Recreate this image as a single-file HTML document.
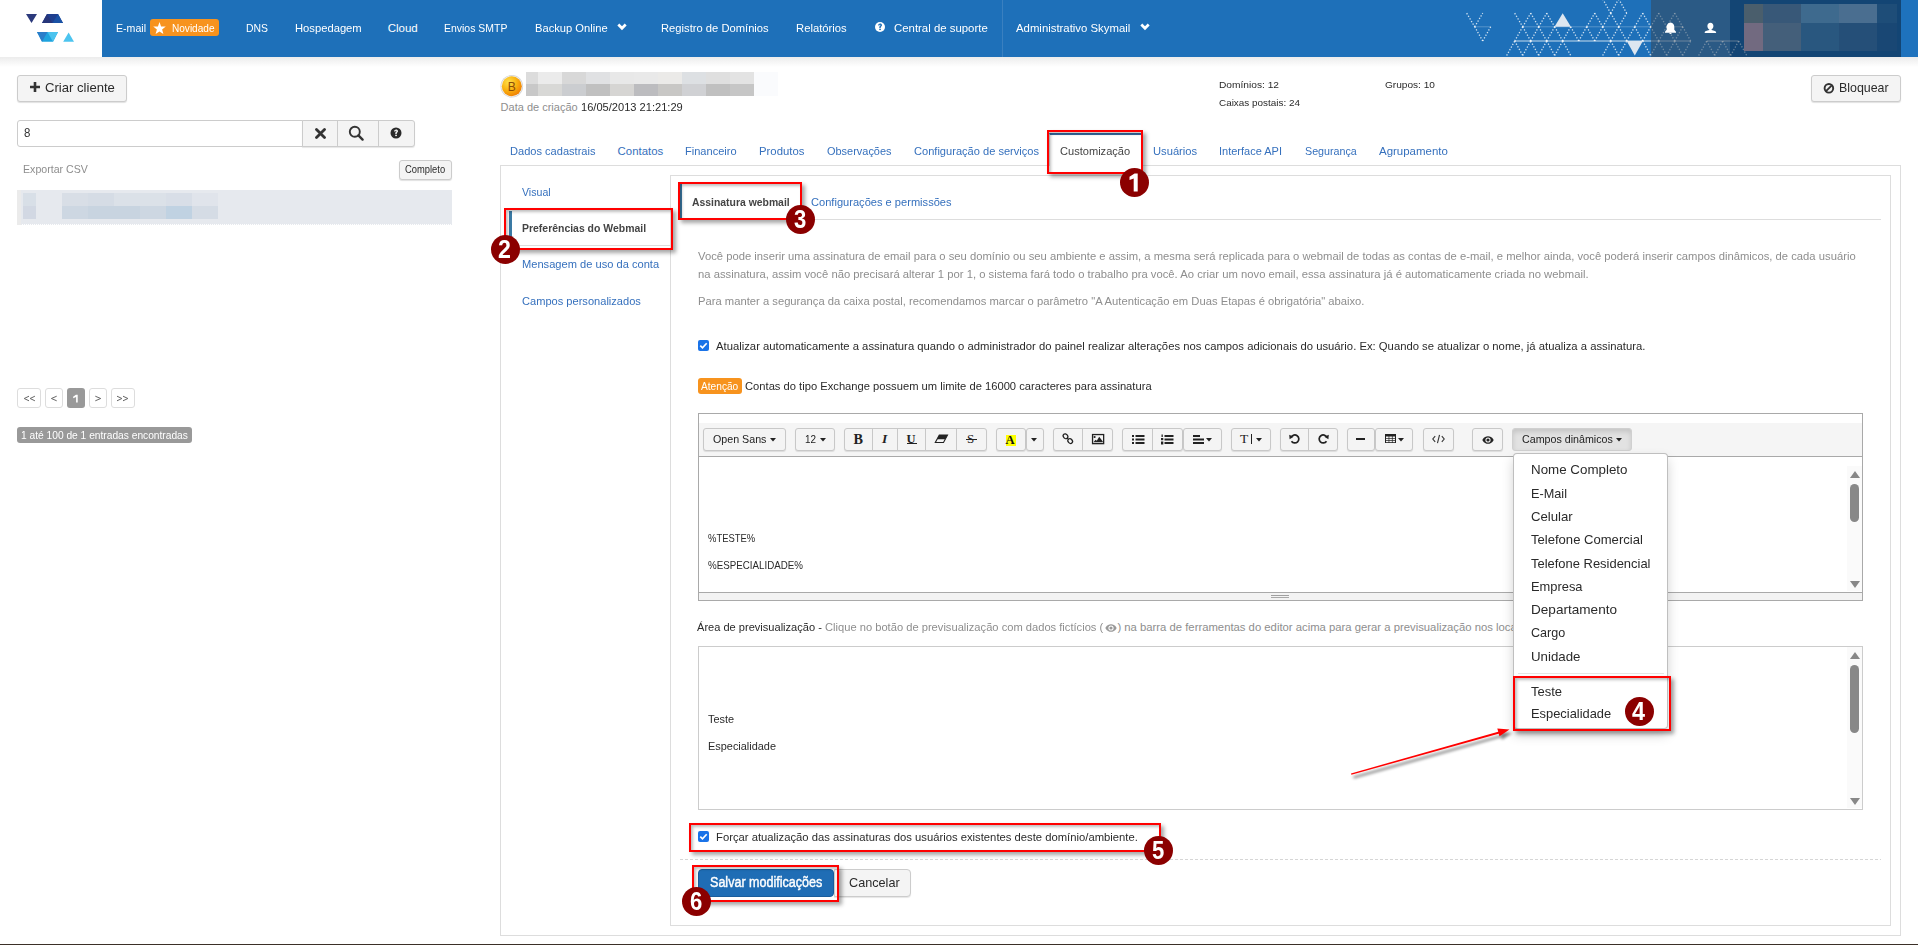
<!DOCTYPE html>
<html><head><meta charset="utf-8"><style>
html,body{margin:0;padding:0;background:#fff;width:1918px;height:945px;overflow:hidden;position:relative}
.a{position:absolute;box-sizing:border-box}
.t{position:absolute;white-space:nowrap;line-height:30px;font-family:"Liberation Sans",sans-serif;transform-origin:0 0}
</style></head><body>
<div class="a" style="left:0px;top:0px;width:102px;height:57px;background:#fff"></div>
<div class="a" style="left:102px;top:0px;width:1816px;height:57px;background:#1e70b9"></div>
<div class="a" style="left:0px;top:57px;width:1918px;height:10px;background:linear-gradient(#ececec,#fff)"></div>
<svg class="a" style="left:0;top:0" width="102" height="57" viewBox="0 0 102 57">
<polygon points="26,14 37,14 31.5,23" fill="#2c3a7c"/>
<polygon points="47,14 58,14 63,23 42,23" fill="#1f3f8f"/>
<polygon points="47,14 52.5,23 42,23" fill="#27367a"/>
<polygon points="58,14 63,23 52.5,23" fill="#1a52a5"/>
<polygon points="37,32 58,32 53,41.7 42,41.7" fill="#1ea3de"/>
<polygon points="37,32 47.5,32 42,41.7" fill="#2a7dc9"/>
<polygon points="47.5,32 58,32 53,41.7" fill="#4cc3ee"/>
<polygon points="68.6,32.5 74,41.7 63.2,41.7" fill="#4cc4ef"/>
</svg>
<span class="t" style="left:116.25px;top:13.00px;font-size:11.5px;color:#fff;transform:scaleX(0.9202);">E-mail</span>
<span class="t" style="left:245.80px;top:13.00px;font-size:11.5px;color:#fff;transform:scaleX(0.9053);">DNS</span>
<span class="t" style="left:294.50px;top:13.00px;font-size:11.5px;color:#fff;transform:scaleX(0.9751);">Hospedagem</span>
<span class="t" style="left:387.70px;top:13.00px;font-size:11.5px;color:#fff;">Cloud</span>
<span class="t" style="left:444.30px;top:13.00px;font-size:11.5px;color:#fff;transform:scaleX(0.9096);">Envios SMTP</span>
<span class="t" style="left:534.70px;top:13.00px;font-size:11.5px;color:#fff;transform:scaleX(0.9706);">Backup Online</span>
<span class="t" style="left:661.30px;top:13.00px;font-size:11.5px;color:#fff;transform:scaleX(0.9738);">Registro de Domínios</span>
<span class="t" style="left:796.00px;top:13.00px;font-size:11.5px;color:#fff;transform:scaleX(0.9788);">Relatórios</span>
<span class="t" style="left:894.00px;top:13.00px;font-size:11.5px;color:#fff;transform:scaleX(0.9905);">Central de suporte</span>
<span class="t" style="left:1015.70px;top:13.00px;font-size:11.5px;color:#fff;transform:scaleX(0.9879);">Administrativo Skymail</span>
<div class="a" style="left:150px;top:19px;width:69px;height:17px;background:#f7931e;border-radius:3px"></div>
<svg class="a" style="left:153px;top:22px" width="13" height="12" viewBox="0 0 24 23"><polygon fill="#fff" points="12,0 15,8.5 24,8.8 17,14.2 19.5,23 12,18 4.5,23 7,14.2 0,8.8 9,8.5"/></svg>
<span class="t" style="left:171.90px;top:13.00px;font-size:11px;color:#fff;transform:scaleX(0.9140);">Novidade</span>
<svg class="a" style="left:617.2px;top:23.3px" width="10" height="8" viewBox="0 0 10 8"><polyline points="1.3,1.5 5,5.3 8.7,1.5" fill="none" stroke="#fff" stroke-width="2.7"/></svg>
<svg class="a" style="left:1140.0px;top:23.3px" width="10" height="8" viewBox="0 0 10 8"><polyline points="1.3,1.5 5,5.3 8.7,1.5" fill="none" stroke="#fff" stroke-width="2.7"/></svg>
<svg class="a" style="left:874px;top:21px" width="12" height="12" viewBox="0 0 12 12"><circle cx="6" cy="6" r="5" fill="#fff"/><path d="M4.1,4.6 C4.1,3.4 5,2.6 6.1,2.6 C7.2,2.6 8,3.3 8,4.3 C8,5.3 7,5.6 6.8,6.2 L6.8,6.9 L5.3,6.9 L5.3,6 C5.4,5 6.5,4.8 6.5,4.3 C6.5,4 6.3,3.8 6,3.8 C5.7,3.8 5.5,4.1 5.5,4.6 Z" fill="#1e70b9"/><rect x="5.2" y="7.7" width="1.7" height="1.4" fill="#1e70b9"/></svg>
<div class="a" style="left:1002px;top:0px;width:1px;height:57px;background:#3a80c0"></div>
<svg class="a" style="left:1440px;top:0" width="478" height="57" viewBox="1440 0 478 57"><line x1="1466.7" y1="13.2" x2="1474.7" y2="26.8" stroke="#fff" stroke-opacity="0.8" stroke-width="1.3" stroke-dasharray="1.3 1.7"/><line x1="1474.7" y1="26.8" x2="1482.7" y2="13.2" stroke="#fff" stroke-opacity="0.8" stroke-width="1.3" stroke-dasharray="1.3 1.7"/><line x1="1474.7" y1="26.8" x2="1482.7" y2="41" stroke="#fff" stroke-opacity="0.8" stroke-width="1.3" stroke-dasharray="1.3 1.7"/><line x1="1482.7" y1="41" x2="1490.7" y2="26.8" stroke="#fff" stroke-opacity="0.8" stroke-width="1.3" stroke-dasharray="1.3 1.7"/><line x1="1514.7" y1="13.2" x2="1522.7" y2="26.8" stroke="#fff" stroke-opacity="0.8" stroke-width="1.3" stroke-dasharray="1.3 1.7"/><line x1="1522.7" y1="26.8" x2="1530.7" y2="13.2" stroke="#fff" stroke-opacity="0.8" stroke-width="1.3" stroke-dasharray="1.3 1.7"/><line x1="1530.7" y1="13.2" x2="1538.7" y2="26.8" stroke="#fff" stroke-opacity="0.8" stroke-width="1.3" stroke-dasharray="1.3 1.7"/><line x1="1538.7" y1="26.8" x2="1546.7" y2="13.2" stroke="#fff" stroke-opacity="0.8" stroke-width="1.3" stroke-dasharray="1.3 1.7"/><line x1="1546.7" y1="13.2" x2="1554.7" y2="26.8" stroke="#fff" stroke-opacity="0.8" stroke-width="1.3" stroke-dasharray="1.3 1.7"/><line x1="1514.7" y1="41" x2="1522.7" y2="26.8" stroke="#fff" stroke-opacity="0.8" stroke-width="1.3" stroke-dasharray="1.3 1.7"/><line x1="1522.7" y1="26.8" x2="1530.7" y2="41" stroke="#fff" stroke-opacity="0.8" stroke-width="1.3" stroke-dasharray="1.3 1.7"/><line x1="1530.7" y1="41" x2="1538.7" y2="26.8" stroke="#fff" stroke-opacity="0.8" stroke-width="1.3" stroke-dasharray="1.3 1.7"/><line x1="1538.7" y1="26.8" x2="1546.7" y2="41" stroke="#fff" stroke-opacity="0.8" stroke-width="1.3" stroke-dasharray="1.3 1.7"/><line x1="1546.7" y1="41" x2="1554.7" y2="26.8" stroke="#fff" stroke-opacity="0.8" stroke-width="1.3" stroke-dasharray="1.3 1.7"/><line x1="1506.7" y1="55.5" x2="1514.7" y2="41" stroke="#fff" stroke-opacity="0.8" stroke-width="1.3" stroke-dasharray="1.3 1.7"/><line x1="1514.7" y1="41" x2="1522.7" y2="55.5" stroke="#fff" stroke-opacity="0.8" stroke-width="1.3" stroke-dasharray="1.3 1.7"/><line x1="1522.7" y1="55.5" x2="1530.7" y2="41" stroke="#fff" stroke-opacity="0.8" stroke-width="1.3" stroke-dasharray="1.3 1.7"/><line x1="1530.7" y1="41" x2="1538.7" y2="55.5" stroke="#fff" stroke-opacity="0.8" stroke-width="1.3" stroke-dasharray="1.3 1.7"/><line x1="1538.7" y1="55.5" x2="1546.7" y2="41" stroke="#fff" stroke-opacity="0.8" stroke-width="1.3" stroke-dasharray="1.3 1.7"/><line x1="1546.7" y1="41" x2="1554.7" y2="55.5" stroke="#fff" stroke-opacity="0.8" stroke-width="1.3" stroke-dasharray="1.3 1.7"/><line x1="1554.7" y1="26.8" x2="1562.7" y2="41" stroke="#fff" stroke-opacity="0.8" stroke-width="1.3" stroke-dasharray="1.3 1.7"/><line x1="1562.7" y1="41" x2="1570.7" y2="26.8" stroke="#fff" stroke-opacity="0.8" stroke-width="1.3" stroke-dasharray="1.3 1.7"/><line x1="1554.7" y1="55.5" x2="1562.7" y2="41" stroke="#fff" stroke-opacity="0.8" stroke-width="1.3" stroke-dasharray="1.3 1.7"/><line x1="1562.7" y1="41" x2="1570.7" y2="55.5" stroke="#fff" stroke-opacity="0.8" stroke-width="1.3" stroke-dasharray="1.3 1.7"/><line x1="1570.7" y1="26.8" x2="1578.7" y2="41" stroke="#fff" stroke-opacity="0.8" stroke-width="1.3" stroke-dasharray="1.3 1.7"/><line x1="1578.7" y1="41" x2="1586.7" y2="26.8" stroke="#fff" stroke-opacity="0.8" stroke-width="1.3" stroke-dasharray="1.3 1.7"/><line x1="1586.7" y1="26.8" x2="1594.7" y2="13.2" stroke="#fff" stroke-opacity="0.8" stroke-width="1.3" stroke-dasharray="1.3 1.7"/><line x1="1594.7" y1="13.2" x2="1602.7" y2="26.8" stroke="#fff" stroke-opacity="0.8" stroke-width="1.3" stroke-dasharray="1.3 1.7"/><line x1="1586.7" y1="26.8" x2="1594.7" y2="41" stroke="#fff" stroke-opacity="0.8" stroke-width="1.3" stroke-dasharray="1.3 1.7"/><line x1="1594.7" y1="41" x2="1602.7" y2="26.8" stroke="#fff" stroke-opacity="0.8" stroke-width="1.3" stroke-dasharray="1.3 1.7"/><line x1="1602.7" y1="26.8" x2="1610.7" y2="13.2" stroke="#fff" stroke-opacity="0.8" stroke-width="1.3" stroke-dasharray="1.3 1.7"/><line x1="1602.7" y1="26.8" x2="1610.7" y2="41" stroke="#fff" stroke-opacity="0.8" stroke-width="1.3" stroke-dasharray="1.3 1.7"/><line x1="1610.7" y1="41" x2="1618.7" y2="26.8" stroke="#fff" stroke-opacity="0.8" stroke-width="1.3" stroke-dasharray="1.3 1.7"/><line x1="1610.7" y1="13.2" x2="1618.7" y2="26.8" stroke="#fff" stroke-opacity="0.8" stroke-width="1.3" stroke-dasharray="1.3 1.7"/><line x1="1618.7" y1="26.8" x2="1626.7" y2="13.2" stroke="#fff" stroke-opacity="0.8" stroke-width="1.3" stroke-dasharray="1.3 1.7"/><line x1="1602.7" y1="-1" x2="1610.7" y2="13.2" stroke="#fff" stroke-opacity="0.8" stroke-width="1.3" stroke-dasharray="1.3 1.7"/><line x1="1610.7" y1="13.2" x2="1618.7" y2="-1" stroke="#fff" stroke-opacity="0.8" stroke-width="1.3" stroke-dasharray="1.3 1.7"/><line x1="1618.7" y1="-1" x2="1626.7" y2="13.2" stroke="#fff" stroke-opacity="0.8" stroke-width="1.3" stroke-dasharray="1.3 1.7"/><line x1="1618.7" y1="26.8" x2="1626.7" y2="41" stroke="#fff" stroke-opacity="0.8" stroke-width="1.3" stroke-dasharray="1.3 1.7"/><line x1="1626.7" y1="41" x2="1634.7" y2="26.8" stroke="#fff" stroke-opacity="0.8" stroke-width="1.3" stroke-dasharray="1.3 1.7"/><line x1="1634.7" y1="26.8" x2="1642.7" y2="13.2" stroke="#fff" stroke-opacity="0.8" stroke-width="1.3" stroke-dasharray="1.3 1.7"/><line x1="1642.7" y1="13.2" x2="1650.7" y2="26.8" stroke="#fff" stroke-opacity="0.8" stroke-width="1.3" stroke-dasharray="1.3 1.7"/><line x1="1634.7" y1="26.8" x2="1642.7" y2="41" stroke="#fff" stroke-opacity="0.8" stroke-width="1.3" stroke-dasharray="1.3 1.7"/><line x1="1642.7" y1="41" x2="1650.7" y2="26.8" stroke="#fff" stroke-opacity="0.8" stroke-width="1.3" stroke-dasharray="1.3 1.7"/><line x1="1602.7" y1="55.5" x2="1610.7" y2="41" stroke="#fff" stroke-opacity="0.8" stroke-width="1.3" stroke-dasharray="1.3 1.7"/><line x1="1610.7" y1="41" x2="1618.7" y2="55.5" stroke="#fff" stroke-opacity="0.8" stroke-width="1.3" stroke-dasharray="1.3 1.7"/><line x1="1618.7" y1="55.5" x2="1626.7" y2="41" stroke="#fff" stroke-opacity="0.8" stroke-width="1.3" stroke-dasharray="1.3 1.7"/><line x1="1642.7" y1="41" x2="1650.7" y2="55.5" stroke="#fff" stroke-opacity="0.8" stroke-width="1.3" stroke-dasharray="1.3 1.7"/><line x1="1474.7" y1="26.8" x2="1490.7" y2="26.8" stroke="#fff" stroke-opacity="0.25" stroke-width="1"/><line x1="1522.7" y1="26.8" x2="1651" y2="26.8" stroke="#fff" stroke-opacity="0.25" stroke-width="1"/><line x1="1514.7" y1="41" x2="1651" y2="41" stroke="#fff" stroke-opacity="0.75" stroke-width="1.2"/><polygon points="1554.5,26.8 1570.9,26.8 1562.7,13.2" fill="#dde6f0"/><polygon points="1626.7,41 1642.9,41 1634.8,55.5" fill="#dde6f0"/><rect x="1651" y="0" width="79" height="57" fill="#2b5a85"/><rect x="1730" y="0" width="171" height="57" fill="#134574"/><rect x="1901" y="0" width="17" height="57" fill="#1e72bd"/><line x1="1650.7" y1="26.8" x2="1658.7" y2="13.2" stroke="#ccc" stroke-opacity="0.45" stroke-width="1.3" stroke-dasharray="1.3 1.7"/><line x1="1658.7" y1="13.2" x2="1666.7" y2="26.8" stroke="#ccc" stroke-opacity="0.45" stroke-width="1.3" stroke-dasharray="1.3 1.7"/><line x1="1666.7" y1="26.8" x2="1674.7" y2="13.2" stroke="#ccc" stroke-opacity="0.45" stroke-width="1.3" stroke-dasharray="1.3 1.7"/><line x1="1674.7" y1="13.2" x2="1682.7" y2="26.8" stroke="#ccc" stroke-opacity="0.45" stroke-width="1.3" stroke-dasharray="1.3 1.7"/><line x1="1682.7" y1="26.8" x2="1690.7" y2="41" stroke="#ccc" stroke-opacity="0.45" stroke-width="1.3" stroke-dasharray="1.3 1.7"/><line x1="1650.7" y1="26.8" x2="1658.7" y2="41" stroke="#ccc" stroke-opacity="0.45" stroke-width="1.3" stroke-dasharray="1.3 1.7"/><line x1="1658.7" y1="41" x2="1666.7" y2="26.8" stroke="#ccc" stroke-opacity="0.45" stroke-width="1.3" stroke-dasharray="1.3 1.7"/><line x1="1666.7" y1="26.8" x2="1674.7" y2="41" stroke="#ccc" stroke-opacity="0.45" stroke-width="1.3" stroke-dasharray="1.3 1.7"/><line x1="1674.7" y1="41" x2="1682.7" y2="26.8" stroke="#ccc" stroke-opacity="0.45" stroke-width="1.3" stroke-dasharray="1.3 1.7"/><line x1="1650.7" y1="55.5" x2="1658.7" y2="41" stroke="#ccc" stroke-opacity="0.45" stroke-width="1.3" stroke-dasharray="1.3 1.7"/><line x1="1658.7" y1="41" x2="1666.7" y2="55.5" stroke="#ccc" stroke-opacity="0.45" stroke-width="1.3" stroke-dasharray="1.3 1.7"/><line x1="1666.7" y1="55.5" x2="1674.7" y2="41" stroke="#ccc" stroke-opacity="0.45" stroke-width="1.3" stroke-dasharray="1.3 1.7"/><line x1="1674.7" y1="41" x2="1682.7" y2="55.5" stroke="#ccc" stroke-opacity="0.45" stroke-width="1.3" stroke-dasharray="1.3 1.7"/><line x1="1682.7" y1="55.5" x2="1690.7" y2="41" stroke="#ccc" stroke-opacity="0.45" stroke-width="1.3" stroke-dasharray="1.3 1.7"/><line x1="1698.7" y1="55.5" x2="1706.7" y2="41" stroke="#ccc" stroke-opacity="0.45" stroke-width="1.3" stroke-dasharray="1.3 1.7"/><line x1="1706.7" y1="41" x2="1714.7" y2="55.5" stroke="#ccc" stroke-opacity="0.45" stroke-width="1.3" stroke-dasharray="1.3 1.7"/><line x1="1714.7" y1="55.5" x2="1722.7" y2="41" stroke="#ccc" stroke-opacity="0.45" stroke-width="1.3" stroke-dasharray="1.3 1.7"/><line x1="1722.7" y1="41" x2="1730.7" y2="55.5" stroke="#ccc" stroke-opacity="0.45" stroke-width="1.3" stroke-dasharray="1.3 1.7"/><line x1="1730.7" y1="55.5" x2="1738.7" y2="41" stroke="#ccc" stroke-opacity="0.45" stroke-width="1.3" stroke-dasharray="1.3 1.7"/><line x1="1738.7" y1="41" x2="1746.7" y2="55.5" stroke="#ccc" stroke-opacity="0.45" stroke-width="1.3" stroke-dasharray="1.3 1.7"/><line x1="1651" y1="41" x2="1690.7" y2="41" stroke="#bbb" stroke-opacity="0.45" stroke-width="1"/><line x1="1674" y1="26.8" x2="1682.7" y2="26.8" stroke="#bbb" stroke-opacity="0.3" stroke-width="1"/><line x1="1706.7" y1="41" x2="1738.7" y2="41" stroke="#bbb" stroke-opacity="0.45" stroke-width="1"/><rect x="1744" y="4" width="19" height="19" fill="#4a5e6c"/><rect x="1744" y="23" width="19" height="28" fill="#726a80"/><rect x="1763" y="4" width="38" height="19" fill="#385878"/><rect x="1763" y="23" width="38" height="28" fill="#445f7a"/><rect x="1801" y="4" width="38" height="19" fill="#3e6a8e"/><rect x="1801" y="23" width="38" height="28" fill="#29577f"/><rect x="1839" y="4" width="38" height="19" fill="#4a6e90"/><rect x="1839" y="23" width="38" height="28" fill="#254f78"/><rect x="1877" y="4" width="20" height="19" fill="#1e4d78"/><rect x="1877" y="23" width="20" height="28" fill="#194774"/><path d="M1670.5,22.5 c-2.6,0 -3.8,2.2 -3.8,4.6 l0,2.6 -1.7,2.1 0,0.9 11,0 0,-0.9 -1.7,-2.1 0,-2.6 c0,-2.4 -1.2,-4.6 -3.8,-4.6z M1669.2,33 a1.4,1.4 0 0 0 2.6,0z" fill="#fff"/><path d="M1710.4,22.8 c-1.9,0 -3,1.3 -3,3.3 c0,1.6 0.8,2.9 1.9,3.4 l0,0.6 c-2.6,0.6 -4.6,1.4 -4.6,2.2 l0,0.8 11.4,0 0,-0.8 c0,-0.8 -2,-1.6 -4.6,-2.2 l0,-0.6 c1.1,-0.5 1.9,-1.8 1.9,-3.4 c0,-2 -1.1,-3.3 -3,-3.3z" fill="#fff"/></svg>
<div class="a" style="left:17px;top:75px;width:110px;height:27px;background:#f4f4f4;border:1px solid #ccc;border-radius:3px;box-shadow:0 1px 1px rgba(0,0,0,.12);"></div>
<svg class="a" style="left:30px;top:82px" width="10" height="10" viewBox="0 0 10 10"><path d="M3.7,0h2.6v3.7h3.7v2.6h-3.7v3.7h-2.6v-3.7h-3.7v-2.6h3.7z" fill="#333"/></svg>
<span class="t" style="left:45.25px;top:73.00px;font-size:13px;color:#2a2a2a;transform:scaleX(1.0079);">Criar cliente</span>
<div class="a" style="left:17px;top:120px;width:286px;height:27px;background:#fff;border:1px solid #ccc;border-radius:3px 0 0 3px;"></div>
<div class="a" style="left:302px;top:120px;width:113px;height:27px;background:#f4f4f4;border:1px solid #ccc;border-radius:0 3px 3px 0;box-shadow:0 1px 1px rgba(0,0,0,.1)"></div>
<div class="a" style="left:337px;top:120px;width:1px;height:27px;background:#ccc"></div>
<div class="a" style="left:378px;top:120px;width:1px;height:27px;background:#ccc"></div>
<span class="t" style="left:23.70px;top:118.00px;font-size:13.5px;color:#333;transform:scaleX(0.8533);">8</span>
<svg class="a" style="left:315px;top:128px" width="11" height="11" viewBox="0 0 11 11"><path d="M1.5,1.5L9.5,9.5M9.5,1.5L1.5,9.5" stroke="#333" stroke-width="2.8" stroke-linecap="round"/></svg>
<svg class="a" style="left:348px;top:125px" width="17" height="17" viewBox="0 0 17 17"><circle cx="6.8" cy="6.8" r="5" fill="none" stroke="#333" stroke-width="1.9"/><line x1="10.4" y1="10.4" x2="14.6" y2="14.6" stroke="#333" stroke-width="2.4" stroke-linecap="round"/></svg>
<svg class="a" style="left:390.4px;top:127.4px" width="12" height="12" viewBox="0 0 12 12"><circle cx="6" cy="6" r="5.5" fill="#2a2a2a"/><path d="M4.1,4.6 C4.1,3.4 5,2.6 6.1,2.6 C7.2,2.6 8,3.3 8,4.3 C8,5.3 7,5.6 6.8,6.2 L6.8,6.9 L5.3,6.9 L5.3,6 C5.4,5 6.5,4.8 6.5,4.3 C6.5,4 6.3,3.8 6,3.8 C5.7,3.8 5.5,4.1 5.5,4.6 Z" fill="#f4f4f4"/><rect x="5.2" y="7.7" width="1.7" height="1.4" fill="#f4f4f4"/></svg>
<span class="t" style="left:23.00px;top:154.00px;font-size:11px;color:#8e8e8e;transform:scaleX(0.9643);">Exportar CSV</span>
<div class="a" style="left:399px;top:160px;width:53px;height:20px;background:#f4f4f4;border:1px solid #ccc;border-radius:3px;box-shadow:0 1px 1px rgba(0,0,0,.12);"></div>
<span class="t" style="left:405.00px;top:155.00px;font-size:10px;color:#2a2a2a;transform:scaleX(0.9369);">Completo</span>
<div class="a" style="left:17px;top:190px;width:435px;height:35px;background:#e6e9ee"></div>
<div class="a" style="left:17px;top:190px;width:4px;height:35px;background:#ebebeb"></div>
<div class="a" style="left:21px;top:224px;width:431px;height:1px;background:repeating-linear-gradient(90deg,#e6e9ee 0 1px,#fff 1px 2px)"></div>
<div class="a" style="left:23px;top:193px;width:13px;height:13px;background:#d8dfe7"></div>
<div class="a" style="left:23px;top:206px;width:13px;height:13px;background:#d2d8e3"></div>
<div class="a" style="left:62px;top:193px;width:26px;height:13px;background:#d8dee6"></div>
<div class="a" style="left:62px;top:206px;width:26px;height:13px;background:#cdd7e2"></div>
<div class="a" style="left:88px;top:193px;width:26px;height:13px;background:#d5dce5"></div>
<div class="a" style="left:88px;top:206px;width:26px;height:13px;background:#c8d4e0"></div>
<div class="a" style="left:114px;top:193px;width:26px;height:13px;background:#dbe1e8"></div>
<div class="a" style="left:114px;top:206px;width:26px;height:13px;background:#c8d4e0"></div>
<div class="a" style="left:140px;top:193px;width:26px;height:13px;background:#dbe1e8"></div>
<div class="a" style="left:140px;top:206px;width:26px;height:13px;background:#cdd7e2"></div>
<div class="a" style="left:166px;top:193px;width:26px;height:13px;background:#d8dee7"></div>
<div class="a" style="left:166px;top:206px;width:26px;height:13px;background:#c0d2e2"></div>
<div class="a" style="left:192px;top:193px;width:26px;height:13px;background:#e0e4eb"></div>
<div class="a" style="left:192px;top:206px;width:26px;height:13px;background:#d5dce5"></div>
<div class="a" style="left:17px;top:388px;width:24px;height:20px;background:#fff;border:1px solid #ddd;border-radius:3px"></div>
<svg class="a" style="left:0;top:388px" width="140" height="20" viewBox="0 388 140 20"><polyline points="29.00,396.2 24.20,398.5 29.00,400.8" fill="none" stroke="#666" stroke-width="1"/><polyline points="34.90,396.2 30.10,398.5 34.90,400.8" fill="none" stroke="#666" stroke-width="1"/></svg>
<div class="a" style="left:45px;top:388px;width:18px;height:20px;background:#fff;border:1px solid #ddd;border-radius:3px"></div>
<svg class="a" style="left:0;top:388px" width="140" height="20" viewBox="0 388 140 20"><polyline points="56.70,396.2 51.40,398.5 56.70,400.8" fill="none" stroke="#666" stroke-width="1"/></svg>
<div class="a" style="left:89px;top:388px;width:18px;height:20px;background:#fff;border:1px solid #ddd;border-radius:3px"></div>
<svg class="a" style="left:0;top:388px" width="140" height="20" viewBox="0 388 140 20"><polyline points="95.30,396.2 100.70,398.5 95.30,400.8" fill="none" stroke="#666" stroke-width="1"/></svg>
<div class="a" style="left:111px;top:388px;width:24px;height:20px;background:#fff;border:1px solid #ddd;border-radius:3px"></div>
<svg class="a" style="left:0;top:388px" width="140" height="20" viewBox="0 388 140 20"><polyline points="117.00,396.2 121.90,398.5 117.00,400.8" fill="none" stroke="#666" stroke-width="1"/><polyline points="123.00,396.2 127.90,398.5 123.00,400.8" fill="none" stroke="#666" stroke-width="1"/></svg>
<div class="a" style="left:67px;top:388px;width:18px;height:20px;background:#999;border-radius:3px"></div>
<svg class="a" style="left:72px;top:394px" width="7" height="10" viewBox="72 394 7 10"><polygon points="75.9,394.8 77.7,394.8 77.7,402.6 76.1,402.6 76.1,396.9 73.3,398.2 73.1,396.7" fill="#fff"/></svg>
<div class="a" style="left:17px;top:427px;width:175px;height:16px;background:#999;border-radius:3px"></div>
<span class="t" style="left:21.25px;top:421.00px;font-size:10px;color:#fff;transform:scaleX(1.0211);">1 até 100 de 1 entradas encontradas</span>
<svg class="a" style="left:500px;top:75px" width="24" height="24" viewBox="0 0 24 24">
<defs><radialGradient id="cg" cx="35%" cy="30%" r="75%"><stop offset="0" stop-color="#ffe14a"/><stop offset="0.55" stop-color="#f9b10e"/><stop offset="1" stop-color="#ef7d05"/></radialGradient></defs>
<circle cx="11.8" cy="11.3" r="11.3" fill="#d4d4d4"/><circle cx="11.8" cy="11.3" r="10.6" fill="#f2f2f2"/><circle cx="11.8" cy="11.3" r="10" fill="url(#cg)"/>
<text x="11.8" y="15.6" font-size="12" text-anchor="middle" fill="#8a4a08" font-family="Liberation Sans">B</text></svg>
<div class="a" style="left:526px;top:72px;width:12px;height:12px;background:#dcdcdc"></div>
<div class="a" style="left:526px;top:84px;width:12px;height:12px;background:#c8c8c8"></div>
<div class="a" style="left:538px;top:72px;width:24px;height:12px;background:#ebebeb"></div>
<div class="a" style="left:538px;top:84px;width:24px;height:12px;background:#d8d8d6"></div>
<div class="a" style="left:562px;top:72px;width:24px;height:12px;background:#d8d8d8"></div>
<div class="a" style="left:562px;top:84px;width:24px;height:12px;background:#cbcdd0"></div>
<div class="a" style="left:586px;top:72px;width:24px;height:12px;background:#e0e1e3"></div>
<div class="a" style="left:586px;top:84px;width:24px;height:12px;background:#c0c0c0"></div>
<div class="a" style="left:610px;top:72px;width:24px;height:12px;background:#e8e8e8"></div>
<div class="a" style="left:610px;top:84px;width:24px;height:12px;background:#d6d5d3"></div>
<div class="a" style="left:634px;top:72px;width:24px;height:12px;background:#e9e9e9"></div>
<div class="a" style="left:634px;top:84px;width:24px;height:12px;background:#bcbcbf"></div>
<div class="a" style="left:658px;top:72px;width:24px;height:12px;background:#ebeae8"></div>
<div class="a" style="left:658px;top:84px;width:24px;height:12px;background:#c8c7c5"></div>
<div class="a" style="left:682px;top:72px;width:24px;height:12px;background:#dde0e3"></div>
<div class="a" style="left:682px;top:84px;width:24px;height:12px;background:#d0d1d4"></div>
<div class="a" style="left:706px;top:72px;width:24px;height:12px;background:#dfdfdf"></div>
<div class="a" style="left:706px;top:84px;width:24px;height:12px;background:#c0c0c0"></div>
<div class="a" style="left:730px;top:72px;width:24px;height:12px;background:#e3e3e3"></div>
<div class="a" style="left:730px;top:84px;width:24px;height:12px;background:#c6c6c6"></div>
<div class="a" style="left:754px;top:72px;width:24px;height:24px;background:#fafbfd"></div>
<span class="t" style="left:500.60px;top:92.00px;font-size:11px;color:#8e8e8e;">Data de criação</span>
<span class="t" style="left:581.40px;top:92.00px;font-size:11px;color:#2a2a2a;transform:scaleX(1.0079);">16/05/2013 21:21:29</span>
<span class="t" style="left:1218.75px;top:70.00px;font-size:9.8px;color:#2a2a2a;transform:scaleX(1.0399);">Domínios: 12</span>
<span class="t" style="left:1218.75px;top:88.00px;font-size:9.8px;color:#2a2a2a;transform:scaleX(1.0112);">Caixas postais: 24</span>
<span class="t" style="left:1384.60px;top:70.00px;font-size:9.8px;color:#2a2a2a;transform:scaleX(1.0309);">Grupos: 10</span>
<div class="a" style="left:1811px;top:75px;width:90px;height:27px;background:#f4f4f4;border:1px solid #ccc;border-radius:3px;box-shadow:0 1px 1px rgba(0,0,0,.12);"></div>
<svg class="a" style="left:1823px;top:82px" width="12" height="12" viewBox="0 0 12 12"><circle cx="5.9" cy="6.3" r="4.3" fill="none" stroke="#333" stroke-width="1.9"/><line x1="3" y1="9.2" x2="8.8" y2="3.4" stroke="#333" stroke-width="1.9"/></svg>
<span class="t" style="left:1839.40px;top:73.00px;font-size:13px;color:#2a2a2a;transform:scaleX(0.9538);">Bloquear</span>
<span class="t" style="left:510.30px;top:136.00px;font-size:11.4px;color:#3570bd;transform:scaleX(0.9716);">Dados cadastrais</span>
<span class="t" style="left:617.60px;top:136.00px;font-size:11.4px;color:#3570bd;">Contatos</span>
<span class="t" style="left:685.40px;top:136.00px;font-size:11.4px;color:#3570bd;transform:scaleX(0.9699);">Financeiro</span>
<span class="t" style="left:758.90px;top:136.00px;font-size:11.4px;color:#3570bd;transform:scaleX(0.9956);">Produtos</span>
<span class="t" style="left:826.60px;top:136.00px;font-size:11.4px;color:#3570bd;transform:scaleX(0.9613);">Observações</span>
<span class="t" style="left:913.50px;top:136.00px;font-size:11.4px;color:#3570bd;transform:scaleX(0.9728);">Configuração de serviços</span>
<span class="t" style="left:1152.80px;top:136.00px;font-size:11.4px;color:#3570bd;transform:scaleX(0.9822);">Usuários</span>
<span class="t" style="left:1219.20px;top:136.00px;font-size:11.4px;color:#3570bd;transform:scaleX(0.9663);">Interface API</span>
<span class="t" style="left:1304.70px;top:136.00px;font-size:11.4px;color:#3570bd;transform:scaleX(0.9402);">Segurança</span>
<span class="t" style="left:1378.90px;top:136.00px;font-size:11.4px;color:#3570bd;transform:scaleX(1.0073);">Agrupamento</span>
<div class="a" style="left:500px;top:165px;width:1401px;height:771px;border:1px solid #ddd;border-top-color:#ddd;background:#fff"></div>
<div class="a" style="left:1049px;top:133px;width:93px;height:33px;background:#fff;border-left:1px solid #ddd;border-right:1px solid #ddd;border-top:2px solid #36689e"></div>
<span class="t" style="left:1060.30px;top:136.00px;font-size:11.4px;color:#444;transform:scaleX(0.9723);">Customização</span>
<span class="t" style="left:521.70px;top:177.00px;font-size:11.4px;color:#3570bd;transform:scaleX(0.9286);">Visual</span>
<div class="a" style="left:509px;top:211px;width:162px;height:35px;background:#fff;border-bottom:1px solid #ddd;border-left:3px solid #3b7aa5"></div>
<span class="t" style="left:522.40px;top:213.00px;font-size:11.2px;color:#444;font-weight:bold;transform:scaleX(0.9338);">Preferências do Webmail</span>
<span class="t" style="left:521.70px;top:249.00px;font-size:11.4px;color:#3570bd;transform:scaleX(0.9751);">Mensagem de uso da conta</span>
<span class="t" style="left:521.70px;top:285.50px;font-size:11.4px;color:#3570bd;transform:scaleX(0.9730);">Campos personalizados</span>
<div class="a" style="left:670px;top:175px;width:1221px;height:751px;border:1px solid #ddd;background:#fff"></div>
<div class="a" style="left:680px;top:219px;width:1201px;height:1px;background:#ddd"></div>
<div class="a" style="left:680px;top:184px;width:120px;height:36px;background:#fff;border-left:2px solid #3b7aa5"></div>
<span class="t" style="left:691.90px;top:187.00px;font-size:11.2px;color:#444;font-weight:bold;transform:scaleX(0.9297);">Assinatura webmail</span>
<span class="t" style="left:810.50px;top:187.00px;font-size:11.4px;color:#3570bd;transform:scaleX(0.9737);">Configurações e permissões</span>
<span class="t" style="left:697.70px;top:242.00px;font-size:10.3px;color:#8e8e8e;transform:scaleX(1.0921);">Você pode inserir uma assinatura de email para o seu domínio ou seu ambiente e assim, a mesma será replicada para o webmail de todas as contas de e-mail, e melhor ainda, você poderá inserir campos dinâmicos, de cada usuário</span>
<span class="t" style="left:697.70px;top:259.50px;font-size:10.3px;color:#8e8e8e;transform:scaleX(1.0942);">na assinatura, assim você não precisará alterar 1 por 1, o sistema fará todo o trabalho pra você. Ao criar um novo email, essa assinatura já é automaticamente criada no webmail.</span>
<span class="t" style="left:697.70px;top:287.00px;font-size:10.3px;color:#8e8e8e;transform:scaleX(1.0905);">Para manter a segurança da caixa postal, recomendamos marcar o parâmetro "A Autenticação em Duas Etapas é obrigatória" abaixo.</span>
<svg class="a" style="left:698px;top:340px" width="11" height="11" viewBox="0 0 11 11"><rect x="0" y="0" width="11" height="11" rx="2" fill="#1a73e8"/><polyline points="2.3,5.6 4.5,7.8 8.7,3.2" fill="none" stroke="#fff" stroke-width="1.7"/></svg>
<span class="t" style="left:715.60px;top:331.00px;font-size:11.4px;color:#2a2a2a;transform:scaleX(0.9904);">Atualizar automaticamente a assinatura quando o administrador do painel realizar alterações nos campos adicionais do usuário. Ex: Quando se atualizar o nome, já atualiza a assinatura.</span>
<div class="a" style="left:698px;top:378px;width:44px;height:16px;background:#f7931e;border-radius:3px"></div>
<span class="t" style="left:701.00px;top:372.00px;font-size:10px;color:#fff;transform:scaleX(1.0150);">Atenção</span>
<span class="t" style="left:745.30px;top:371.00px;font-size:11.4px;color:#2a2a2a;transform:scaleX(0.9819);">Contas do tipo Exchange possuem um limite de 16000 caracteres para assinatura</span>
<div class="a" style="left:698px;top:413px;width:1165px;height:188px;border:1px solid #a9a9a9;background:#fff"></div>
<div class="a" style="left:699px;top:423px;width:1163px;height:33px;background:#f5f5f5"></div>
<div class="a" style="left:699px;top:456px;width:1163px;height:1px;background:#a9a9a9"></div>
<div class="a" style="left:699px;top:592px;width:1163px;height:1px;background:#a9a9a9"></div>
<div class="a" style="left:699px;top:593px;width:1163px;height:7px;background:#f3f3f3"></div>
<div class="a" style="left:1271px;top:594.5px;width:18px;height:1.5px;background:#a0a0a0"></div>
<div class="a" style="left:1271px;top:597px;width:18px;height:1px;background:#a8a8a8"></div>
<div class="a" style="left:703px;top:428px;width:83px;height:23px;background:#f4f4f4;border:1px solid #c8c8c8;border-radius:3px;box-shadow:0 1px 1px rgba(0,0,0,.10)"></div>
<span class="t" style="left:713.30px;top:424.00px;font-size:11px;color:#222;transform:scaleX(0.9709);">Open Sans</span>
<svg class="a" style="left:770px;top:438px" width="6" height="4" viewBox="0 0 6 4"><polygon points="0,0 6,0 3,3.5" fill="#222"/></svg>
<div class="a" style="left:795px;top:428px;width:40px;height:23px;background:#f4f4f4;border:1px solid #c8c8c8;border-radius:3px;box-shadow:0 1px 1px rgba(0,0,0,.10)"></div>
<span class="t" style="left:804.80px;top:424.00px;font-size:11px;color:#222;transform:scaleX(0.9016);">12</span>
<svg class="a" style="left:819.5px;top:438px" width="6" height="4" viewBox="0 0 6 4"><polygon points="0,0 6,0 3,3.5" fill="#222"/></svg>
<div class="a" style="left:844px;top:428px;width:143px;height:23px;background:#f4f4f4;border:1px solid #c8c8c8;border-radius:3px;box-shadow:0 1px 1px rgba(0,0,0,.10)"></div>
<div class="a" style="left:872px;top:428px;width:1px;height:23px;background:#c8c8c8"></div>
<div class="a" style="left:897px;top:428px;width:1px;height:23px;background:#c8c8c8"></div>
<div class="a" style="left:925px;top:428px;width:1px;height:23px;background:#c8c8c8"></div>
<div class="a" style="left:956px;top:428px;width:1px;height:23px;background:#c8c8c8"></div>
<span class="t" style="left:853.5px;top:428px;font:bold 14.2px/22px 'Liberation Serif';color:#222">B</span>
<span class="t" style="left:882px;top:428px;font:italic bold 13.5px/22px 'Liberation Serif';color:#222">I</span>
<span class="t" style="left:906.5px;top:427.5px;font:bold 12.5px/22px 'Liberation Serif';color:#222">U</span>
<div class="a" style="left:907px;top:443px;width:10px;height:1px;background:#222"></div>
<svg class="a" style="left:934px;top:434px" width="15" height="10" viewBox="0 0 15 10"><polygon points="5.3,1 13.5,1 9.5,8.5 1.3,8.5" fill="none" stroke="#222" stroke-width="1.1"/><polygon points="5.3,1 13.5,1 11.2,5.3 3,5.3" fill="#222"/></svg>
<span class="t" style="left:967px;top:428px;font:13px/22px 'Liberation Serif';color:#222">S</span>
<div class="a" style="left:965.5px;top:438.5px;width:11.5px;height:1.0px;background:#222"></div>
<div class="a" style="left:996px;top:428px;width:30px;height:23px;background:#f4f4f4;border:1px solid #c8c8c8;border-radius:3px;box-shadow:0 1px 1px rgba(0,0,0,.10)"></div>
<div class="a" style="left:1026px;top:428px;width:18px;height:23px;background:#f4f4f4;border:1px solid #c8c8c8;border-radius:3px;box-shadow:0 1px 1px rgba(0,0,0,.10)"></div>
<div class="a" style="left:1006px;top:435px;width:10px;height:11px;background:#ff0"></div>
<span class="t" style="left:1005.5px;top:428.5px;font:bold 12.5px/22px 'Liberation Serif';color:#111">A</span>
<svg class="a" style="left:1031px;top:438px" width="6" height="4" viewBox="0 0 6 4"><polygon points="0,0 6,0 3,3.5" fill="#222"/></svg>
<div class="a" style="left:1053px;top:428px;width:60px;height:23px;background:#f4f4f4;border:1px solid #c8c8c8;border-radius:3px;box-shadow:0 1px 1px rgba(0,0,0,.10)"></div>
<div class="a" style="left:1082px;top:428px;width:1px;height:23px;background:#c8c8c8"></div>
<svg class="a" style="left:1061px;top:432px" width="14" height="13" viewBox="0 0 14 13"><ellipse cx="4.5" cy="4.3" rx="2.1" ry="2.6" transform="rotate(-40 4.5 4.3)" fill="none" stroke="#222" stroke-width="1.25"/><ellipse cx="9.2" cy="9.1" rx="2.1" ry="2.6" transform="rotate(-40 9.2 9.1)" fill="none" stroke="#222" stroke-width="1.25"/><line x1="6" y1="6" x2="7.6" y2="7.4" stroke="#222" stroke-width="1.1"/></svg>
<svg class="a" style="left:1091px;top:433px" width="14" height="12" viewBox="0 0 14 12"><rect x="1.55" y="1.55" width="11.1" height="9.1" fill="none" stroke="#222" stroke-width="1.3"/><polygon points="2.4,9.2 4.6,6.8 5.8,7.7 8.2,3.8 11.8,8.4 11.8,9.2" fill="#222"/><circle cx="3.6" cy="4" r="1.1" fill="#222"/></svg>
<div class="a" style="left:1122px;top:428px;width:61px;height:23px;background:#f4f4f4;border:1px solid #c8c8c8;border-radius:3px;box-shadow:0 1px 1px rgba(0,0,0,.10)"></div>
<div class="a" style="left:1152px;top:428px;width:1px;height:23px;background:#c8c8c8"></div>
<div class="a" style="left:1183px;top:428px;width:39px;height:23px;background:#f4f4f4;border:1px solid #c8c8c8;border-radius:3px;box-shadow:0 1px 1px rgba(0,0,0,.10)"></div>
<svg class="a" style="left:1132px;top:435px" width="13" height="9" viewBox="0 0 13 9"><rect x="0" y="0" width="2" height="2" fill="#222"/><rect x="0" y="3.5" width="2" height="2" fill="#222"/><rect x="0" y="7" width="2" height="2" fill="#222"/><rect x="3.5" y="0" width="9" height="2" fill="#222"/><rect x="3.5" y="3.5" width="9" height="2" fill="#222"/><rect x="3.5" y="7" width="9" height="2" fill="#222"/></svg>
<svg class="a" style="left:1161px;top:434px" width="13" height="11" viewBox="0 0 13 11"><rect x="0.5" y="0.5" width="1.3" height="2.5" fill="#222"/><rect x="0" y="4" width="2.3" height="2.2" fill="#222"/><rect x="0" y="7.5" width="2.3" height="3" fill="#222"/><rect x="3.5" y="1" width="9" height="2" fill="#222"/><rect x="3.5" y="4.5" width="9" height="2" fill="#222"/><rect x="3.5" y="8" width="9" height="2" fill="#222"/></svg>
<svg class="a" style="left:1192.5px;top:435px" width="11" height="9" viewBox="0 0 11 9"><rect x="0" y="0" width="7" height="2" fill="#222"/><rect x="0" y="3.5" width="11" height="2" fill="#222"/><rect x="0" y="7" width="11" height="2" fill="#222"/></svg>
<svg class="a" style="left:1206px;top:438px" width="6" height="4" viewBox="0 0 6 4"><polygon points="0,0 6,0 3,3.5" fill="#222"/></svg>
<div class="a" style="left:1231px;top:428px;width:40px;height:23px;background:#f4f4f4;border:1px solid #c8c8c8;border-radius:3px;box-shadow:0 1px 1px rgba(0,0,0,.10)"></div>
<span class="t" style="left:1240px;top:427.5px;font:13.5px/22px 'Liberation Serif';color:#222">T</span>
<div class="a" style="left:1250.5px;top:434px;width:1.0px;height:10px;background:#222"></div>
<svg class="a" style="left:1255.5px;top:438px" width="6" height="4" viewBox="0 0 6 4"><polygon points="0,0 6,0 3,3.5" fill="#222"/></svg>
<div class="a" style="left:1280px;top:428px;width:58px;height:23px;background:#f4f4f4;border:1px solid #c8c8c8;border-radius:3px;box-shadow:0 1px 1px rgba(0,0,0,.10)"></div>
<div class="a" style="left:1308px;top:428px;width:1px;height:23px;background:#c8c8c8"></div>
<svg class="a" style="left:1289px;top:434px" width="11" height="10" viewBox="0 0 11 10"><path d="M2.2,3.2 A4,4 0 1 1 2.5,7.2" fill="none" stroke="#222" stroke-width="1.7"/><polygon points="0.2,0.8 4.6,2.8 0.6,5.2" fill="#222"/></svg>
<svg class="a" style="left:1317.5px;top:434px" width="11" height="10" viewBox="0 0 11 10"><path d="M8.8,3.2 A4,4 0 1 0 8.5,7.2" fill="none" stroke="#222" stroke-width="1.7"/><polygon points="10.8,0.8 6.4,2.8 10.4,5.2" fill="#222"/></svg>
<div class="a" style="left:1347px;top:428px;width:28px;height:23px;background:#f4f4f4;border:1px solid #c8c8c8;border-radius:3px;box-shadow:0 1px 1px rgba(0,0,0,.10)"></div>
<div class="a" style="left:1375px;top:428px;width:38px;height:23px;background:#f4f4f4;border:1px solid #c8c8c8;border-radius:3px;box-shadow:0 1px 1px rgba(0,0,0,.10)"></div>
<div class="a" style="left:1356px;top:438px;width:9px;height:2px;background:#222"></div>
<svg class="a" style="left:1384.5px;top:434px" width="11" height="9" viewBox="0 0 11 9"><rect x="0" y="0" width="11" height="9" fill="#222"/><rect x="1" y="2.5" width="2.6" height="1.5" fill="#f4f4f4"/><rect x="4.3" y="2.5" width="2.6" height="1.5" fill="#f4f4f4"/><rect x="7.6" y="2.5" width="2.4" height="1.5" fill="#f4f4f4"/><rect x="1" y="4.7" width="2.6" height="1.5" fill="#f4f4f4"/><rect x="4.3" y="4.7" width="2.6" height="1.5" fill="#f4f4f4"/><rect x="7.6" y="4.7" width="2.4" height="1.5" fill="#f4f4f4"/><rect x="1" y="6.9" width="2.6" height="1.3" fill="#f4f4f4"/><rect x="4.3" y="6.9" width="2.6" height="1.3" fill="#f4f4f4"/><rect x="7.6" y="6.9" width="2.4" height="1.3" fill="#f4f4f4"/></svg>
<svg class="a" style="left:1398px;top:438px" width="6" height="4" viewBox="0 0 6 4"><polygon points="0,0 6,0 3,3.5" fill="#222"/></svg>
<div class="a" style="left:1423px;top:428px;width:31px;height:23px;background:#f4f4f4;border:1px solid #c8c8c8;border-radius:3px;box-shadow:0 1px 1px rgba(0,0,0,.10)"></div>
<svg class="a" style="left:1432px;top:434px" width="13" height="10" viewBox="0 0 13 10"><polyline points="3.2,2.2 0.8,5 3.2,7.8" fill="none" stroke="#333" stroke-width="1.1"/><polyline points="9.8,2.2 12.2,5 9.8,7.8" fill="none" stroke="#333" stroke-width="1.1"/><line x1="7.5" y1="0.8" x2="5.5" y2="9.2" stroke="#333" stroke-width="1.1"/></svg>
<div class="a" style="left:1472px;top:428px;width:31px;height:23px;background:#f4f4f4;border:1px solid #c8c8c8;border-radius:3px;box-shadow:0 1px 1px rgba(0,0,0,.10)"></div>
<svg class="a" style="left:1481.5px;top:435.5px" width="12" height="8" viewBox="0 0 12 8"><path d="M0.3,4 C2,0.8 4,0.2 6,0.2 C8,0.2 10,0.8 11.7,4 C10,7.2 8,7.8 6,7.8 C4,7.8 2,7.2 0.3,4z" fill="#222"/><circle cx="6" cy="4" r="2.6" fill="#f4f4f4"/><circle cx="6" cy="4" r="1.6" fill="#222"/></svg>
<div class="a" style="left:1512px;top:428px;width:120px;height:23px;background:#e2e2e2;border:1px solid #d0d0d0;border-radius:3px;box-shadow:inset 0 3px 5px rgba(0,0,0,.125)"></div>
<span class="t" style="left:1522.30px;top:424.00px;font-size:11px;color:#222;transform:scaleX(0.9711);">Campos dinâmicos</span>
<svg class="a" style="left:1616px;top:438px" width="6" height="4" viewBox="0 0 6 4"><polygon points="0,0 6,0 3,3.5" fill="#222"/></svg>
<span class="t" style="left:707.80px;top:523.00px;font-size:11.2px;color:#2a2a2a;transform:scaleX(0.8429);">%TESTE%</span>
<span class="t" style="left:707.80px;top:550.00px;font-size:11.2px;color:#2a2a2a;transform:scaleX(0.8724);">%ESPECIALIDADE%</span>
<div class="a" style="left:1847px;top:466px;width:15px;height:125px;background:#fafafa"></div>
<svg class="a" style="left:1849.8px;top:471px" width="10" height="7" viewBox="0 0 10 7"><polygon points="5,0 10,7 0,7" fill="#888"/></svg>
<svg class="a" style="left:1849.8px;top:581px" width="10" height="7" viewBox="0 0 10 7"><polygon points="0,0 10,0 5,7" fill="#888"/></svg>
<div class="a" style="left:1849.8px;top:484px;width:9.200000000000045px;height:38px;background:#888;border-radius:5px"></div>
<span class="t" style="left:697.40px;top:612.00px;font-size:11.3px;color:#2a2a2a;transform:scaleX(0.9796);">Área de previsualização -</span>
<span class="t" style="left:825.30px;top:612.00px;font-size:11.3px;color:#8e8e8e;transform:scaleX(0.9869);">Clique no botão de previsualização com dados fictícios (</span>
<svg class="a" style="left:1104.5px;top:624px" width="12" height="8" viewBox="0 0 12 8"><path d="M0.3,4 C2,0.8 4,0.2 6,0.2 C8,0.2 10,0.8 11.7,4 C10,7.2 8,7.8 6,7.8 C4,7.8 2,7.2 0.3,4z" fill="#999"/><circle cx="6" cy="4" r="2.6" fill="#fff"/><circle cx="6" cy="4" r="1.6" fill="#999"/></svg>
<span class="t" style="left:1117.40px;top:612.00px;font-size:11.3px;color:#8e8e8e;">) na barra de ferramentas do editor acima para gerar a previsualização nos locais dos campos</span>
<div class="a" style="left:698px;top:646px;width:1165px;height:164px;border:1px solid #ccc;background:#fff"></div>
<div class="a" style="left:1847px;top:647px;width:15px;height:161px;background:#fafafa"></div>
<svg class="a" style="left:1849.8px;top:652px" width="10" height="7" viewBox="0 0 10 7"><polygon points="5,0 10,7 0,7" fill="#888"/></svg>
<svg class="a" style="left:1849.8px;top:798px" width="10" height="7" viewBox="0 0 10 7"><polygon points="0,0 10,0 5,7" fill="#888"/></svg>
<div class="a" style="left:1849.8px;top:664.5px;width:9.200000000000045px;height:68.5px;background:#888;border-radius:5px"></div>
<span class="t" style="left:707.70px;top:704.00px;font-size:11.2px;color:#2a2a2a;transform:scaleX(0.9776);">Teste</span>
<span class="t" style="left:707.70px;top:731.00px;font-size:11.2px;color:#2a2a2a;transform:scaleX(0.9756);">Especialidade</span>
<svg class="a" style="left:698px;top:831px" width="11" height="11" viewBox="0 0 11 11"><rect x="0" y="0" width="11" height="11" rx="2" fill="#1a73e8"/><polyline points="2.3,5.6 4.5,7.8 8.7,3.2" fill="none" stroke="#fff" stroke-width="1.7"/></svg>
<span class="t" style="left:715.70px;top:822.00px;font-size:11.4px;color:#2a2a2a;transform:scaleX(0.9885);">Forçar atualização das assinaturas dos usuários existentes deste domínio/ambiente.</span>
<div class="a" style="left:680px;top:859px;width:1201px;height:1px;background:repeating-linear-gradient(90deg,#d6d6d6 0 3px,transparent 3px 5px)"></div>
<div class="a" style="left:834px;top:869px;width:77px;height:28px;background:#f4f4f4;border:1px solid #ccc;border-radius:0 4px 4px 0;box-shadow:0 1px 1px rgba(0,0,0,.1)"></div>
<span class="t" style="left:848.80px;top:868.00px;font-size:12.6px;color:#2a2a2a;transform:scaleX(1.0060);">Cancelar</span>
<div class="a" style="left:698px;top:869px;width:136px;height:28px;background:#1f6db5;border:1px solid #1a5d9c;border-radius:4px"></div>
<span class="t" style="left:709.70px;top:867.00px;font-size:14px;color:#fff;transform:scaleX(0.8970);-webkit-text-stroke:0.4px #fff;">Salvar modificações</span>
<div class="a" style="left:1513px;top:453px;width:155px;height:276px;background:#fff;border:1px solid rgba(0,0,0,.25);border-radius:4px;box-shadow:0 6px 12px rgba(0,0,0,.175)"></div>
<span class="t" style="left:1530.60px;top:455.00px;font-size:12.8px;color:#2a2a2a;transform:scaleX(1.0432);">Nome Completo</span>
<span class="t" style="left:1530.60px;top:479.00px;font-size:12.8px;color:#2a2a2a;transform:scaleX(0.9917);">E-Mail</span>
<span class="t" style="left:1530.60px;top:502.00px;font-size:12.8px;color:#2a2a2a;transform:scaleX(1.0296);">Celular</span>
<span class="t" style="left:1530.60px;top:525.00px;font-size:12.8px;color:#2a2a2a;transform:scaleX(1.0210);">Telefone Comercial</span>
<span class="t" style="left:1530.60px;top:549.00px;font-size:12.8px;color:#2a2a2a;transform:scaleX(1.0119);">Telefone Residencial</span>
<span class="t" style="left:1530.60px;top:572.00px;font-size:12.8px;color:#2a2a2a;transform:scaleX(1.0058);">Empresa</span>
<span class="t" style="left:1530.60px;top:595.00px;font-size:12.8px;color:#2a2a2a;transform:scaleX(1.0604);">Departamento</span>
<span class="t" style="left:1530.60px;top:618.00px;font-size:12.8px;color:#2a2a2a;transform:scaleX(0.9828);">Cargo</span>
<span class="t" style="left:1530.60px;top:642.00px;font-size:12.8px;color:#2a2a2a;transform:scaleX(1.0377);">Unidade</span>
<span class="t" style="left:1530.60px;top:677.00px;font-size:12.8px;color:#2a2a2a;transform:scaleX(1.0163);">Teste</span>
<span class="t" style="left:1530.60px;top:699.00px;font-size:12.8px;color:#2a2a2a;transform:scaleX(1.0063);">Especialidade</span>
<div class="a" style="left:1518px;top:673px;width:146px;height:1px;background:#e5e5e5"></div>
<div class="a" style="left:1047px;top:130px;width:96px;height:44px;border:2px solid #f00;box-shadow:3px 3px 4px rgba(0,0,0,.35), inset 2px 2px 3px rgba(0,0,0,.25)"></div>
<div class="a" style="left:504px;top:208px;width:169px;height:42px;border:2px solid #f00;box-shadow:3px 3px 4px rgba(0,0,0,.35), inset 2px 2px 3px rgba(0,0,0,.25)"></div>
<div class="a" style="left:678px;top:182px;width:124px;height:38px;border:2px solid #f00;box-shadow:3px 3px 4px rgba(0,0,0,.35), inset 2px 2px 3px rgba(0,0,0,.25)"></div>
<div class="a" style="left:1513px;top:676px;width:158px;height:55px;border:2px solid #f00;box-shadow:3px 3px 4px rgba(0,0,0,.35), inset 2px 2px 3px rgba(0,0,0,.25)"></div>
<div class="a" style="left:689px;top:823px;width:472px;height:29px;border:2px solid #f00;box-shadow:3px 3px 4px rgba(0,0,0,.35), inset 2px 2px 3px rgba(0,0,0,.25)"></div>
<div class="a" style="left:692px;top:865px;width:147px;height:37px;border:2px solid #f00;box-shadow:3px 3px 4px rgba(0,0,0,.35), inset 2px 2px 3px rgba(0,0,0,.25)"></div>
<svg class="a" style="left:1340px;top:720px" width="180" height="65" viewBox="1340 720 180 65">
<defs><filter id="sh" x="-20%" y="-50%" width="140%" height="200%"><feGaussianBlur stdDeviation="1.6"/></filter></defs>
<g transform="translate(2.5,3.5)" opacity="0.5" filter="url(#sh)"><line x1="1351" y1="774" x2="1499" y2="732.5" stroke="#000" stroke-width="2.2"/><polygon points="1509.5,729.5 1497.3,728.6 1499.5,736.3" fill="#000"/></g>
<polygon points="1351,773.4 1499,731.6 1499.4,733.4 1351.4,774.8" fill="#f00"/>
<polygon points="1509.5,729.5 1497.3,728.6 1499.5,736.3" fill="#f00"/>
</svg>
<div class="a" style="left:1119.9px;top:167.9px;width:29.2px;height:29.2px;border-radius:50%;background:#8b0000"></div>
<svg class="a" style="left:1126.5px;top:172.5px" width="16" height="20" viewBox="-8 -10 16 20"><polygon points="-0.4,-9.5 2.7,-9.5 2.7,8.6 -1.3,8.6 -1.3,-4.6 -5.5,-3.1 -5.5,-6.3" fill="#fff"/></svg>
<div class="a" style="left:490.79999999999995px;top:234.9px;width:29.2px;height:29.2px;border-radius:50%;background:#8b0000"></div>
<span class="t" style="left:498.10px;top:233.31px;font-size:25px;color:#fff;font-weight:bold;transform:scale(0.9281,1.0286)">2</span>
<div class="a" style="left:786.0px;top:204.9px;width:29.2px;height:29.2px;border-radius:50%;background:#8b0000"></div>
<span class="t" style="left:793.80px;top:203.35px;font-size:25px;color:#fff;font-weight:bold;transform:scale(0.8849,1.0225)">3</span>
<div class="a" style="left:1624.9px;top:696.8px;width:29.2px;height:29.2px;border-radius:50%;background:#8b0000"></div>
<span class="t" style="left:1632.00px;top:694.84px;font-size:25px;color:#fff;font-weight:bold;transform:scale(0.9353,1.0523)">4</span>
<div class="a" style="left:1143.9px;top:836.0px;width:29.2px;height:29.2px;border-radius:50%;background:#8b0000"></div>
<span class="t" style="left:1151.90px;top:833.90px;font-size:25px;color:#fff;font-weight:bold;transform:scale(0.8849,1.0287)">5</span>
<div class="a" style="left:681.85px;top:886.9499999999999px;width:29.2px;height:29.2px;border-radius:50%;background:#8b0000"></div>
<span class="t" style="left:689.80px;top:885.45px;font-size:25px;color:#fff;font-weight:bold;transform:scale(0.8849,1.0226)">6</span>
<div class="a" style="left:0px;top:944px;width:1918px;height:1px;background:#3b3028"></div>
</body></html>
